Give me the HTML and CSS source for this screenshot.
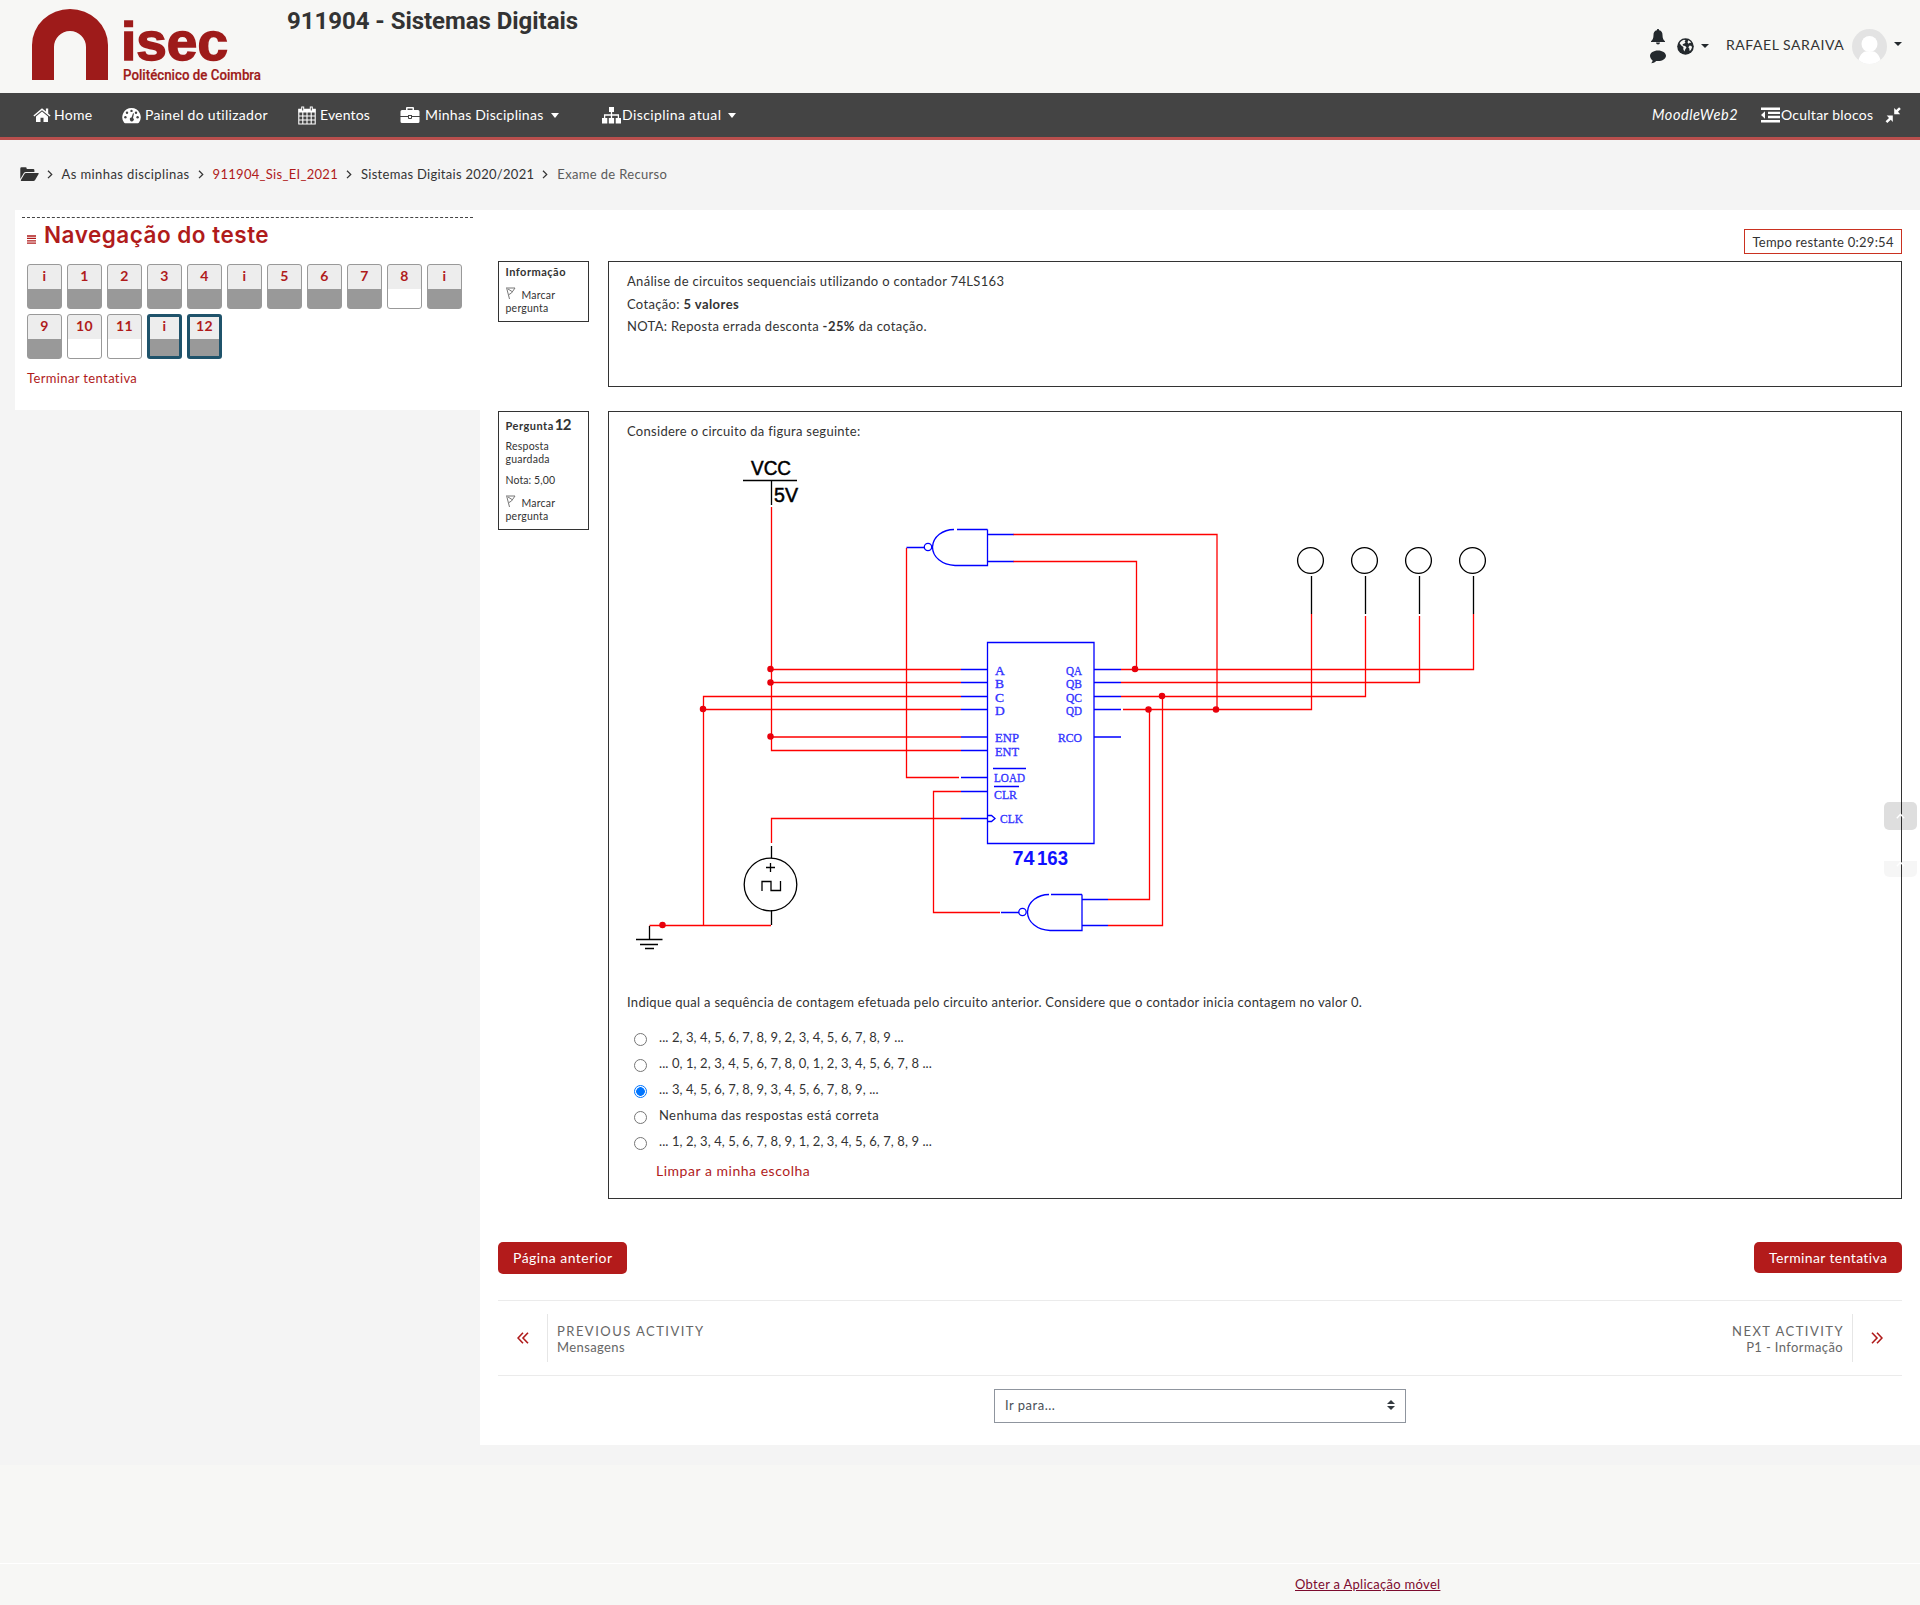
FILE: index.html
```html
<!DOCTYPE html>
<html lang="pt">
<head>
<meta charset="utf-8">
<title>911904 - Sistemas Digitais</title>
<link rel="stylesheet" href="styles.css">
</head>
<body>
<header class="top">
  <svg class="logo" width="240" height="93" viewBox="0 0 240 93" role="img" aria-label="isec">
    <path fill="#9e1b1a" d="M6 80V45a38 36 0 0 1 76 0v35H60V47a16 16 0 0 0-32 0v33z"/>
    <text class="logo-name" x="95" y="60" textLength="107" lengthAdjust="spacingAndGlyphs">isec</text>
    <text class="logo-sub" x="97" y="79.500" textLength="138" lengthAdjust="spacingAndGlyphs">Politécnico de Coimbra</text>
  </svg>
  <h1 class="course">911904 - Sistemas Digitais</h1>
  <div class="user">
    <div class="alerts">
      <svg width="16" height="16" viewBox="0 0 16 16"><path fill="#24292d" d="M8 0c.7 0 1.100.5 1.100 1.200C11.600 1.700 12.500 3.600 12.500 6c0 3.500 1 5 2.500 6.200v.8H1v-.8C2.500 11 3.500 9.500 3.500 6c0-2.400.9-4.300 3.400-4.800C6.900.5 7.300 0 8 0zM6 13.500h4a2 2 0 0 1-4 0z"/></svg>
      <svg width="16" height="14" viewBox="0 0 16 14"><path fill="#24292d" d="M8 .5c4.400 0 8 2.300 8 5.300s-3.600 5.300-8 5.300l-1.800-.1C4.800 12.400 3 13.200 1 13.300c.9-.8 1.500-1.700 1.600-2.900C1 9.400 0 7.600 0 5.800 0 2.800 3.600.5 8 .5z"/></svg>
    </div>
    <svg class="globe" width="17" height="17" viewBox="0 0 17 17"><circle cx="8.500" cy="8.500" r="8.300" fill="#24292d"/><path fill="#f7f7f5" d="M2.600 5.200C3.600 3.400 5.200 2.200 7 1.800l1.600.4-1 1.400.9.900-1.400 1.300-1.400.3.200 1.300 2.300.5 1.300 1.600-1.200 1.700-.9 2.400-1.100-2.400.1-2.100-2.100-1.600zM11.200 2.300l1.800 1 1.200 1.700-1.600-.3-.9 1-1.200-1.200zM12.600 7.500l1.900.4.500 1.600-1.100 2.600-1.300.8-.3-2.400-1-1.300z"/></svg>
    <i class="caret dark c1"></i>
    <span class="uname">RAFAEL SARAIVA</span>
    <svg class="avatar" width="35" height="35" viewBox="0 0 35 35"><defs><clipPath id="av"><circle cx="17.500" cy="17.500" r="17.500"/></clipPath></defs><g clip-path="url(#av)"><path fill="#e3e3e3" d="M0 0h35v35H0z"/><circle cx="17.500" cy="15" r="8" fill="#fff"/><path fill="#fff" d="M5.500 36c1-9 5-13 8-13.500h8c3 .5 7 4.500 8 13.500z"/></g></svg>
    <i class="caret dark c2"></i>
  </div>
</header>

<nav class="bar">
  <a class="n1"><svg width="18" height="16" viewBox="0 0 18 16"><path fill="#fff" d="M9 1.200L.4 8.500l.9 1.100L9 3.200l7.700 6.400.9-1.100-2.400-2V1.500h-2.300v3zM9 4.600L3 9.600V15h4.500v-4.200h3V15H15V9.600z"/></svg><span>Home</span></a>
  <a class="n2"><svg width="19" height="17" viewBox="0 0 19 17"><path fill="#fff" d="M9.500 1A9.200 9.200 0 0 1 17 15.500q-.4.800-1.200.8H3.200q-.8 0-1.200-.8A9.200 9.200 0 0 1 9.500 1z"/><g fill="#444"><circle cx="9.500" cy="3.900" r="1.200"/><circle cx="5" cy="5.800" r="1.200"/><circle cx="3.400" cy="10.200" r="1.200"/><circle cx="15.600" cy="10.200" r="1.200"/><circle cx="14" cy="5.800" r="1.200"/><path d="M11 6.200l1 .3-1 4.500a1.900 1.900 0 1 1-1.500-.4z"/></g></svg><span>Painel do utilizador</span></a>
  <a class="n3"><svg width="18" height="19" viewBox="0 0 18 19"><path fill="none" stroke="#fff" stroke-width="1.100" d="M.8 3.200h16.400v14.800H.8zM4.800 6v12M9 6v12M13.200 6v12M1 10h16M1 14h16"/><path fill="#fff" d="M.6 3h16.800v3.600H.6zM3.200.5h3v5h-3zM11.800.5h3v5h-3z"/><path stroke="#444" d="M4.700 1.500v3M13.300 1.500v3"/></svg><span>Eventos</span></a>
  <a class="n4"><svg width="20" height="17" viewBox="0 0 20 17"><path fill="#fff" d="M6 3V1q0-1 1-1h6q1 0 1 1v2h4q1.500 0 1.500 1.500V9H12V8H8v1H.5V4.500Q.5 3 2 3zm1.500 0h5V1.500h-5zM.5 10H8v1q0 1 1 1h2q1 0 1-1v-1h7.500v4.500q0 1.500-1.500 1.500H2q-1.500 0-1.500-1.500z"/><path fill="#fff" d="M9 9h2v2H9z"/></svg><span>Minhas Disciplinas</span><i class="caret"></i></a>
  <a class="n5"><svg width="19" height="17" viewBox="0 0 19 17"><path fill="#fff" d="M7 0h5v5H7zM0 11h5.300v5.500H0zM6.800 11h5.300v5.500H6.800zM13.700 11H19v5.500h-5.300z"/><path fill="none" stroke="#fff" stroke-width="1.300" d="M9.500 5v6M2.600 11V8h13.800v3"/></svg><span>Disciplina atual</span><i class="caret"></i></a>
  <span class="mw">MoodleWeb2</span>
  <a class="hide"><svg width="19" height="16" viewBox="0 0 19 16"><path fill="#fff" d="M0 .5h19V3H0zM7 4.700h12v2.400H7zM7 8.800h12v2.400H7zM0 13h19v2.500H0zM4 4.200v7.600L0 8z"/></svg><span>Ocultar blocos</span></a>
  <svg class="compress" width="17" height="16" viewBox="0 0 17 16"><path fill="#fff" d="M9.200 7.200V.9l2 2L14.100.2 15.800 2 13 4.800l2.200 2.400zM7.800 8.600v6.300l-2-2.100L2.300 16 .6 14.300 4 11 1.700 8.600z"/></svg>
</nav>

<div class="crumbs">
  <svg width="19" height="15" viewBox="0 0 19 15"><path fill="#333" d="M.3 12V1.500Q.3.300 1.500.3h4q1.200 0 1.200 1.200V2h6.500q1.200 0 1.200 1.200V5H6Q4.500 5 3.700 6.200zM5.900 6h12.300q.8.200.4 1l-3.500 6q-.6 1-1.700 1H1.300q-.8-.2-.4-1l3.500-6Q5 6 5.900 6z"/></svg>
  <svg class="ch first" width="6" height="9" viewBox="0 0 6 9"><path d="M1 .7l3.700 3.700L1 8.100"/></svg>
  <span class="k1">As minhas disciplinas</span>
  <svg class="ch" width="6" height="9" viewBox="0 0 6 9"><path d="M1 .7l3.700 3.700L1 8.100"/></svg>
  <span class="red">911904_Sis_EI_2021</span>
  <svg class="ch" width="6" height="9" viewBox="0 0 6 9"><path d="M1 .7l3.700 3.700L1 8.100"/></svg>
  <span>Sistemas Digitais 2020/2021</span>
  <svg class="ch" width="6" height="9" viewBox="0 0 6 9"><path d="M1 .7l3.700 3.700L1 8.100"/></svg>
  <span class="muted">Exame de Recurso</span>
</div>

<div class="page">
  <aside class="side">
    <section class="navblock">
      <h2><svg width="9" height="9" viewBox="0 0 9 9"><path stroke="#b01b1b" stroke-width="1.300" d="M0 1h9M0 3.400h9M0 5.800h9M0 8.200h9"/></svg><span>Navegação do teste</span></h2>
      <div class="qgrid">
        <a class="q ans">i</a><a class="q ans">1</a><a class="q ans">2</a><a class="q ans">3</a><a class="q ans">4</a><a class="q ans">i</a><a class="q ans">5</a><a class="q ans">6</a><a class="q ans">7</a><a class="q">8</a><a class="q ans">i</a>
        <a class="q ans">9</a><a class="q">10</a><a class="q">11</a><a class="q ans cur">i</a><a class="q ans cur">12</a>
      </div>
      <a class="finish red">Terminar tentativa</a>
    </section>
  </aside>

  <main class="main">
    <div class="timer">Tempo restante 0:29:54</div>

    <section class="que">
      <div class="info i1">
        <b>Informação</b>
        <p class="flag"><svg width="10" height="13" viewBox="0 0 10 13"><path fill="none" stroke="#777" d="M.5.500l3 11.500M1 1h8L5.500 6 3 7.500M2 2l4 2.500"/></svg>Marcar<br>pergunta</p>
      </div>
      <div class="body b1">
        <p>Análise de circuitos sequenciais utilizando o contador 74LS163</p>
        <p>Cotação: <b>5 valores</b></p>
        <p>NOTA: Reposta errada desconta <b>-25%</b> da cotação.</p>
      </div>
    </section>

    <section class="que">
      <div class="info i2">
        <b>Pergunta</b> <b class="qno">12</b>
        <p class="state">Resposta<br>guardada</p>
        <p class="grade">Nota: 5,00</p>
        <p class="flag"><svg width="10" height="13" viewBox="0 0 10 13"><path fill="none" stroke="#777" d="M.5.500l3 11.500M1 1h8L5.500 6 3 7.500M2 2l4 2.500"/></svg>Marcar<br>pergunta</p>
      </div>
      <div class="body b2">
        <p>Considere o circuito da figura seguinte:</p>
        <svg class="circuit" width="900" height="520" viewBox="627 447 900 520">
          <g class="w">
            <path d="M771.500 507V750.500H961M771.500 669.500H961M771.500 682.500H961M961 696.500H703.500V925.500M703.500 709.500H961M649.500 925.500H771M906.500 548V777.500H959M961 791.500H933.500V912.500H1000M961 818.500H771.500V843"/>
            <path d="M1013 534.500H1217V709.500M1013 561.500H1136.500V669.500M1121 669.500H1473.500V614M1121 682.500H1419.500V616M1121 696.500H1365.500V616M1123 709.500H1311.500V614M771.500 737H961M1149.500 709.500V899.500H1108M1162.500 696.500V925.500H1108"/>
          </g>
          <g class="b">
            <path d="M987.500 642.500H1094V843.500H987.500zM961 669.500h26M961 682.500h26M961 696.500h26M961 709.500h26M961 737h26M961 750.500h26M961 777.500h26M961 791.500h26M961 818.500h26M1094 669.500h27M1094 682.500h27M1094 696.500h27M1094 709.500h27M1094 737h27"/>
            <path d="M987.500 815.500h4l3.500 3-3.500 3h-4M993 768.500h33M994 786.500h25"/>
            <path d="M987.500 529.500v36H955M987.500 529.500H957M954 529.500c-11 0-21 7-21.500 17.500 0 10 9.500 18 22.500 18.500M987.500 534.500h26M987.500 561.500h26M906.500 547.500h18"/><circle cx="928" cy="547" r="3.700"/>
            <path d="M1082 894.500v36h-32M1082 894.500h-31M1049 894.500c-11 0-21 7-21.500 17.500 0 10 9.500 18 22.500 18.500M1082 899.500h26M1082 925.500h26M1001 912.500h18"/><circle cx="1022.500" cy="912" r="3.700"/>
          </g>
          <g class="k">
            <path d="M743 480.500h54M771.500 480.500V505M771.500 846v12M771.500 910v15M649.500 926v13.500M636 939.500h26.500M640 944.500h18M645 948.500h9M766 867.500h9M770.500 863v9M762 891v-9.500h9v9h9.500V881M1311.500 576v38M1365.500 576v38M1419.500 576v38M1473.500 576v38"/>
            <circle cx="770.500" cy="884.500" r="26.300"/><circle cx="1310.500" cy="560.500" r="12.900"/><circle cx="1364.500" cy="560.500" r="12.900"/><circle cx="1418.500" cy="560.500" r="12.900"/><circle cx="1472.500" cy="560.500" r="12.900"/>
          </g>
          <g class="dot"><circle cx="770.500" cy="669" r="2.600"/><circle cx="770.500" cy="682.500" r="2.600"/><circle cx="770.500" cy="736.500" r="2.600"/><circle cx="703" cy="709" r="2.600"/><circle cx="662.500" cy="925" r="2.600"/><circle cx="1135" cy="669" r="2.600"/><circle cx="1162" cy="696" r="2.600"/><circle cx="1148.500" cy="709.500" r="2.600"/><circle cx="1216" cy="709.500" r="2.600"/></g>
          <g class="lbl"><text x="751" y="475" textLength="40" lengthAdjust="spacingAndGlyphs">VCC</text><text x="774" y="502" textLength="24" lengthAdjust="spacingAndGlyphs">5V</text></g>
          <g class="pin">
            <text x="995" y="675">A</text><text x="995" y="688">B</text><text x="995" y="702">C</text><text x="995" y="715">D</text>
            <text x="995" y="742" textLength="24" lengthAdjust="spacingAndGlyphs">ENP</text><text x="995" y="755.500" textLength="24" lengthAdjust="spacingAndGlyphs">ENT</text>
            <text x="994" y="781.500" textLength="31" lengthAdjust="spacingAndGlyphs">LOAD</text><text x="994" y="799" textLength="23" lengthAdjust="spacingAndGlyphs">CLR</text><text x="1000" y="823" textLength="23" lengthAdjust="spacingAndGlyphs">CLK</text>
            <text x="1066" y="675" textLength="16" lengthAdjust="spacingAndGlyphs">QA</text><text x="1066" y="688" textLength="16" lengthAdjust="spacingAndGlyphs">QB</text><text x="1066" y="702" textLength="16" lengthAdjust="spacingAndGlyphs">QC</text><text x="1066" y="715" textLength="16" lengthAdjust="spacingAndGlyphs">QD</text><text x="1058" y="742" textLength="24" lengthAdjust="spacingAndGlyphs">RCO</text>
          </g>
          <g class="chip"><text x="1012.500" y="864.500" textLength="22" lengthAdjust="spacingAndGlyphs">74</text><text x="1037" y="864.500" textLength="31" lengthAdjust="spacingAndGlyphs">163</text></g>
        </svg>
        <p class="ask">Indique qual a sequência de contagem efetuada pelo circuito anterior. Considere que o contador inicia contagem no valor 0.</p>
        <div class="opts">
          <label><i class="radio"></i><span>... 2, 3, 4, 5, 6, 7, 8, 9, 2, 3, 4, 5, 6, 7, 8, 9 ...</span></label>
          <label><i class="radio"></i><span>... 0, 1, 2, 3, 4, 5, 6, 7, 8, 0, 1, 2, 3, 4, 5, 6, 7, 8 ...</span></label>
          <label><i class="radio on"></i><span>... 3, 4, 5, 6, 7, 8, 9, 3, 4, 5, 6, 7, 8, 9, ...</span></label>
          <label><i class="radio"></i><span class="words">Nenhuma das respostas está correta</span></label>
          <label><i class="radio"></i><span>... 1, 2, 3, 4, 5, 6, 7, 8, 9, 1, 2, 3, 4, 5, 6, 7, 8, 9 ...</span></label>
        </div>
        <a class="clear red">Limpar a minha escolha</a>
      </div>
    </section>

    <div class="btns"><a class="btn">Página anterior</a><a class="btn b31">Terminar tentativa</a></div>

    <div class="acts">
      <a class="act"><svg width="12" height="12" viewBox="0 0 12 12"><path d="M6 .7L1 6l5 5.300M11 .7L6 6l5 5.300"/></svg><span class="at"><em>PREVIOUS ACTIVITY</em><span>Mensagens</span></span></a>
      <a class="act next"><span class="at"><em>NEXT ACTIVITY</em><span>P1 - Informação</span></span><svg width="12" height="12" viewBox="0 0 12 12"><path d="M6 .7L11 6l-5 5.300M1 .7L6 6l-5 5.300"/></svg></a>
    </div>
    <div class="jump"><span>Ir para...</span><svg width="8" height="10" viewBox="0 0 8 10"><path fill="#343a40" d="M0 4l4-4 4 4zM0 6h8l-4 4z"/></svg></div>
  </main>
</div>

<footer class="foot"><div class="apps"><a>Obter a Aplicação móvel</a></div></footer>

<div class="scroll s1"><svg width="9" height="6" viewBox="0 0 9 6"><path d="M.8 5.200l3.700-4 3.700 4"/></svg></div>
<div class="scroll s2"><svg width="9" height="6" viewBox="0 0 9 6"><path d="M.8 5.200l3.700-4 3.700 4"/></svg></div>
</body>
</html>
```
FILE: styles.css
```css
* { box-sizing: border-box; }
body {
  margin: 0;
  min-height: 1605px;
  background: #f7f7f5;
  color: #333;
  font: 13px/22px Lato, sans-serif;
  letter-spacing: .29px;
}
p, h1, h2 { margin: 0; }
svg { display: block; flex: none; }
.red { color: #b01b1b; }

/* header */
.top { display: flex; height: 93px; padding-left: 26px; }
.logo text { letter-spacing: 0; }
.logo-name { font: bold 54px "Liberation Sans", sans-serif; fill: #9e1b1a; stroke: #9e1b1a; stroke-width: 1.5px; }
.logo-sub { font: 500 14px Roboto, sans-serif; fill: #9e1b1a; stroke: #9e1b1a; stroke-width: .2px; }
.course { margin: 5px 0 0 21px; font: bold 24px/32px Roboto, sans-serif; letter-spacing: -.04px; white-space: nowrap; }
.user { display: flex; margin-left: auto; padding: 29px 18px 0 0; height: 93px; align-items: flex-start; }
.alerts { display: flex; flex-direction: column; gap: 5px; width: 16px; }
.globe { margin: 9px 0 0 11px; }
.caret { flex: none; width: 0; height: 0; border: 4.5px solid transparent; border-bottom: 0; border-top: 5px solid #fff; }
.caret.dark { border-width: 4px 4px 0; border-top-color: #24292d; }
.c1 { margin: 15px 17px 0 7px; }
.uname { width: 118px; margin-right: 8px; font-size: 14px; letter-spacing: .55px; line-height: 32px; white-space: nowrap; }
.c2 { margin: 13px 0 0 7px; }

/* navigation bar */
.bar {
  display: flex;
  align-items: center;
  height: 47px;
  padding: 0 18px 0 33px;
  background: #444;
  border-bottom: 3px solid #b94f4d;
  color: #fff;
  font-size: 14px;
}
.bar a { display: flex; align-items: center; white-space: nowrap; }
.bar a span { flex: none; }
.n1 { width: 89px; gap: 3px; }
.n2 { width: 176px; gap: 4px; }
.n3 { width: 102px; gap: 4px; letter-spacing: .16px; }
.n4 { width: 202px; gap: 5px; letter-spacing: .26px; }
.n4 .caret { margin-left: 3px; }
.n5 { gap: 1px; letter-spacing: .41px; }
.n5 .caret { margin-left: 6px; }
.mw { margin-left: auto; width: 109px; font-size: 14.5px; font-style: italic; letter-spacing: .55px; white-space: nowrap; }
.hide { width: 124px; gap: 1px; letter-spacing: .24px; }

/* breadcrumb */
.crumbs { display: flex; align-items: center; height: 70px; padding: 0 20px 2px 19.5px; background: #f4f4f4; white-space: nowrap; }
.crumbs .k1 { letter-spacing: .4px; }
.crumbs .muted { color: #5b5b5b; letter-spacing: .34px; }
.ch { margin: 0 9px 0 8px; }
.ch path { fill: none; stroke: #333; stroke-width: 1.3; }

/* page columns */
.page { display: flex; align-items: flex-start; height: 1255px; padding-left: 15px; background: #f4f4f4; }
.side { width: 465px; }
.navblock { height: 200px; padding: 7px 7px 0; background: #fff; }
.navblock h2 {
  display: flex;
  align-items: center;
  gap: 8px;
  height: 36px;
  padding: 0 0 2px 5px;
  border-top: 1px dashed #444;
  color: #b01b1b;
  font: 600 22.5px/34px Inter, sans-serif;
  letter-spacing: .5px;
  white-space: nowrap;
}
.navblock h2 svg { margin-top: 10px; }
.qgrid { display: grid; grid-template-columns: repeat(11, 35px); gap: 5px; margin: 11px 0 0 5px; }
.q {
  height: 45px;
  border: 1px solid #999;
  border-radius: 3px;
  background: linear-gradient(#ededed 24px, #fff 24px);
  color: #b01b1b;
  font-weight: bold;
  font-size: 14px;
  line-height: 21px;
  text-align: center;
}
.q.ans { background: linear-gradient(#ededed 24px, #999 24px); }
.q.cur { border: 3px solid #1f536b; background: linear-gradient(#ededed 22px, #999 22px); line-height: 17px; }
.finish { display: inline-block; margin: 8px 0 0 5px; letter-spacing: .37px; }

/* main column */
.main { flex: 1; height: 1235px; padding: 19px 18px 0; background: #fff; }
.timer { width: 158px; height: 25px; margin: 0 0 7px auto; border: 1px solid #ca3120; padding-left: 7.5px; line-height: 24px; letter-spacing: .24px; white-space: nowrap; }
.que { display: flex; align-items: flex-start; gap: 19px; margin-bottom: 24px; }
.info { width: 91px; padding: 3px 6.5px; border: 1px solid #333; font-size: 10.5px; letter-spacing: .23px; line-height: 13px; white-space: nowrap; }
.info b { font-size: 11px; line-height: 14px; letter-spacing: .5px; }
.i1 { height: 61px; }
.i2 { height: 119px; padding-top: 5px; }
.flag svg { display: inline-block; margin: 0 6px -1px 0; }
.i1 .flag { margin-top: 8px; }
.info .qno { margin-left: -2px; font-size: 15px; letter-spacing: -.7px; }
.state { margin-top: 7px; }
.grade { margin: 8px 0; letter-spacing: .1px; }
.body { flex: 1; padding: 8px 18px; border: 1px solid #333; }
.b1 { height: 126px; }
.b2 { height: 788px; }
.b1 p { line-height: 22.5px; letter-spacing: .32px; }
.b1 b { letter-spacing: .45px; }
.circuit { margin-top: 5px; }
.circuit text { letter-spacing: 0; }
.circuit path, .circuit circle { fill: none; stroke-width: 1.3; }
.w path { stroke: #f00; }
.b path, .b circle { stroke: #00f; }
.k path, .k circle { stroke: #000; }
.circuit .dot circle { fill: #e8000c; stroke: #e8000c; }
.lbl { font: 19.5px "Liberation Sans", sans-serif; fill: #000; stroke: #000; stroke-width: .5px; }
.pin { font: 13.5px "Liberation Serif", serif; fill: #33f; stroke: #33f; stroke-width: .35px; }
.chip { font: bold 20px "Liberation Sans", sans-serif; fill: #11f; }
.ask { margin-top: 23.5px; white-space: nowrap; }
.opts { margin-top: 13.5px; letter-spacing: .09px; }
.opts .words { letter-spacing: .4px; }
.opts label { display: flex; height: 26px; padding-left: 7px; gap: 12px; }
.radio { flex: none; width: 13px; height: 13px; margin-top: 7px; border: 1px solid #767676; border-radius: 50%; background: #fff; }
.radio.on { border-color: #0075ff; background: radial-gradient(#0075ff 4px, #fff 4.6px); }
.clear { display: inline-block; margin: 4px 0 0 29px; font-size: 14px; letter-spacing: .52px; }
.btns { display: flex; justify-content: space-between; align-items: flex-start; margin-top: 43px; }
.btn { width: 129px; height: 32px; padding-left: 15px; border-radius: 5px; background: #b31b1b; color: #fff; font-size: 14px; letter-spacing: .45px; line-height: 31px; white-space: nowrap; }
.b31 { width: 148px; height: 31px; letter-spacing: .38px; }
.acts { display: flex; justify-content: space-between; height: 76px; margin-top: 26px; padding: 13px 19px 0 19px; border: solid #ebebeb; border-width: 1px 0; }
.act { display: flex; align-items: center; height: 48px; }
.act path { fill: none; stroke: #b01b1b; stroke-width: 1.6; }
.at { display: flex; flex-direction: column; justify-content: center; height: 48px; margin-left: 18px; padding: 2px 0 0 9px; border-left: 1px solid #e6e6e6; color: #666; letter-spacing: .38px; line-height: 16px; }
.at em { font-style: normal; letter-spacing: 1.47px; }
.next .at { align-items: flex-end; margin: 0 18px 0 0; padding: 2px 9px 0 0; border: solid #e6e6e6; border-width: 0 1px 0 0; }
.next em { margin-right: -1px; }
.jump { display: flex; align-items: center; justify-content: space-between; width: 412px; height: 34px; margin: 13px auto 0; padding: 0 10px 2px; border: 1px solid #8f959e; color: #495057; letter-spacing: .5px; }

/* footer */
.foot { height: 140px; padding-top: 98px; }
.apps { height: 42px; padding: 9px 0 0 1295px; border-top: 1px solid #fff; }
.apps a { color: #7c0a2e; text-decoration: underline; }

/* floating scroll buttons */
.scroll { position: absolute; left: 1884px; width: 33px; display: flex; justify-content: center; background: rgba(0, 0, 0, .13); }
.scroll path { fill: none; stroke: #fff; stroke-width: 1.3; }
.s1 { top: 802px; height: 28px; padding-top: 11px; border-radius: 5px; }
.s2 { top: 861px; height: 16px; border-radius: 0 0 5px 5px; background: rgba(0, 0, 0, .035); }
```
